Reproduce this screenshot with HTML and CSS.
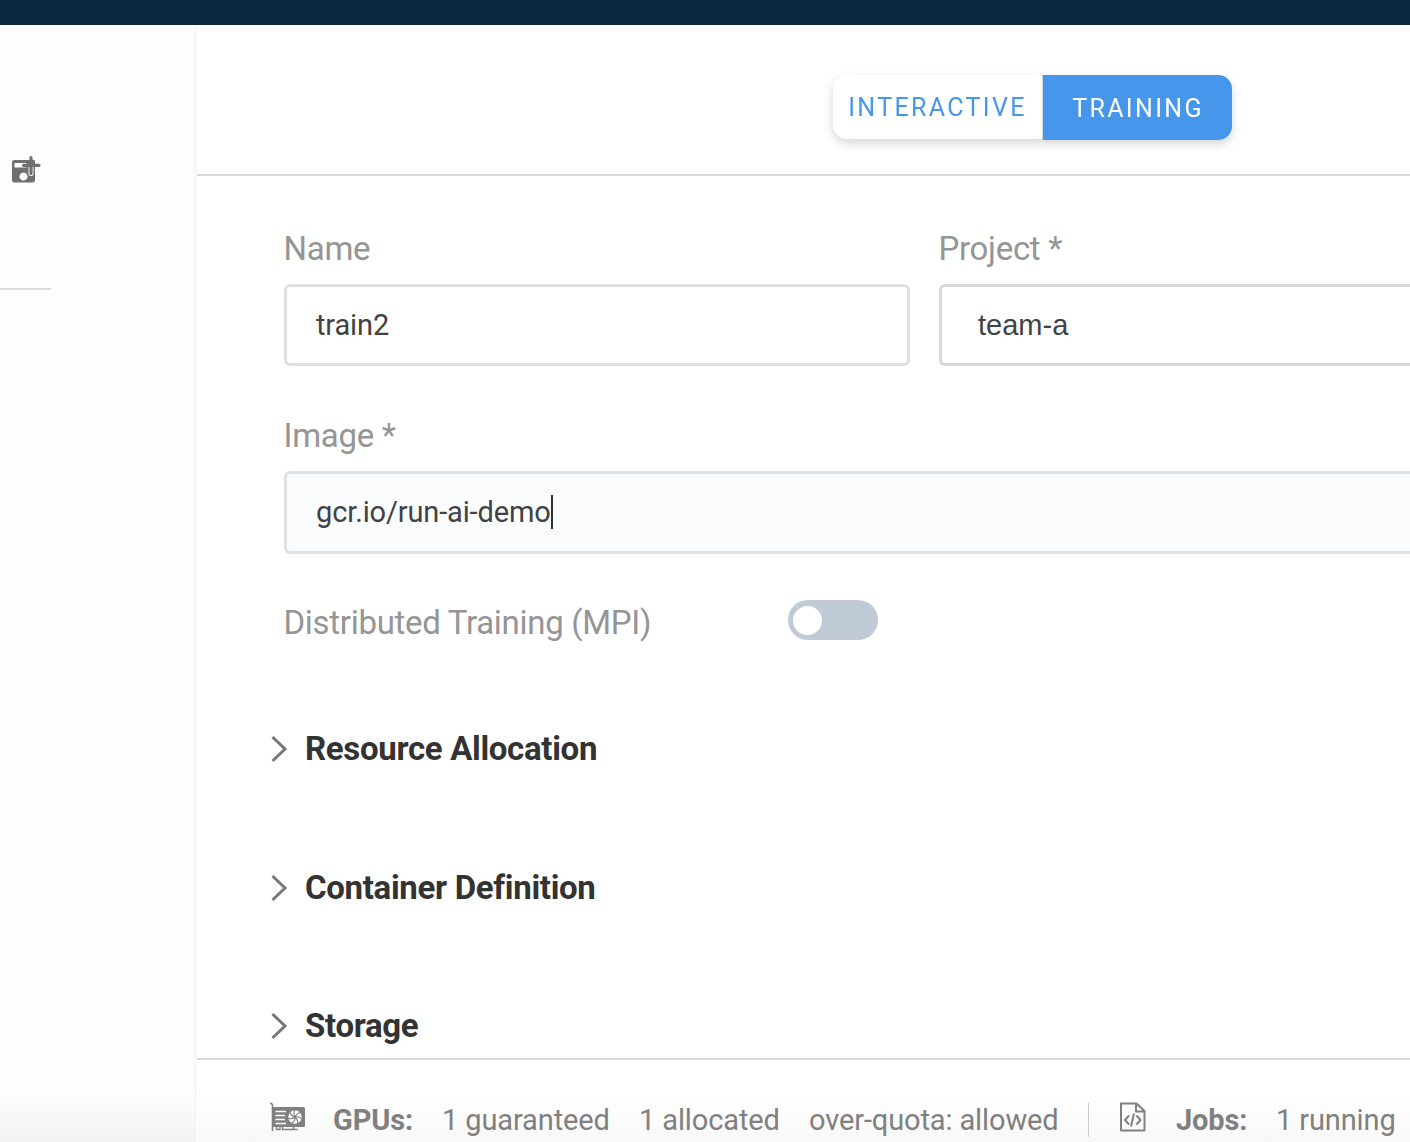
FILE: index.html
```html
<!DOCTYPE html>
<html lang="en">
<head>
<meta charset="utf-8">
<title>New job</title>
<link rel="stylesheet" href="styles.css">
</head>
<body>
<div class="topbar"></div>
<div class="layout">
  <aside class="sidebar">
    <svg class="save-icon" width="32" height="30" viewBox="0 0 32 30">
      <path fill="#707070" fill-rule="evenodd" d="M4.500 5h19.500q1 0 1 1v19q0 2.500-2.500 2.500h-18q-2.500 0-2.500-2.500v-17.500q0-2.500 2.500-2.500zM4.500 8v4.500h12v-4.500zM13.500 17.500a4 4 0 1 0 .01 0z"/>
      <path d="M21 12v6.500" fill="none" stroke="#fcfcfc" stroke-width="5" stroke-linecap="round"/>
      <path d="M21 2.500v16M13.500 10.300h15.500" fill="none" stroke="#707070" stroke-width="3.200" stroke-linecap="round"/>
    </svg>
    <div class="sidebar-line"></div>
  </aside>
  <main class="main">
    <header class="modes">
      <div class="segmented">
        <button class="segment">INTERACTIVE</button>
        <button class="segment active">TRAINING</button>
      </div>
    </header>
    <form class="form">
      <div class="field-row">
        <div class="field name"><label>Name</label><div class="input">train2</div></div>
        <div class="field project"><label>Project *</label><div class="input select">team-a</div></div>
      </div>
      <div class="field image"><label>Image *</label><div class="input focused">gcr.io/run-ai-demo<span class="caret"></span></div></div>
      <div class="switch-row"><span class="switch-label">Distributed Training (MPI)</span><span class="switch"></span></div>
      <div class="section"><svg width="18" height="30" viewBox="0 0 18 30"><path d="M2.500 3 15 15 2.500 27"/></svg><h2>Resource Allocation</h2></div>
      <div class="section"><svg width="18" height="30" viewBox="0 0 18 30"><path d="M2.500 3 15 15 2.500 27"/></svg><h2>Container Definition</h2></div>
      <div class="section"><svg width="18" height="30" viewBox="0 0 18 30"><path d="M2.500 3 15 15 2.500 27"/></svg><h2>Storage</h2></div>
    </form>
    <footer class="status">
      <svg class="gpu-icon" width="36" height="30" viewBox="0 0 36 30" fill="none" stroke="#808080">
        <path d="M0 1.500h1Q2.500 1.500 2.500 4v25" stroke-width="1.600"/>
        <path d="M2.500 5h31q1.500 0 1.500 1.500v17q0 1.500-1.500 1.500h-31z" fill="#808080" stroke="none"/>
        <path d="M5.500 9.500h10.500M5.500 13.500h9.500M5.500 17.500h9.500M5.500 21.500h10.500" stroke="#fcfcfc" stroke-width="1.500"/>
        <circle cx="25" cy="15" r="6.800" fill="#fcfcfc" stroke="none"/>
        <path d="M25 15Q23 11 25 8M25 15Q27 11 30.500 10.500M25 15Q29 14 32 17M25 15Q28.500 18 27.500 22M25 15Q25.500 19 22 21M25 15Q21 18 18 16M25 15Q21 14 20 10" stroke-width="1.100"/>
        <path d="M6.500 25v2.500h3.500v-2.500M12.500 25v2.500h11v-2.500M24 27.500h3.500" stroke-width="1.400"/>
      </svg>
      <b class="gpus">GPUs:</b>
      <span class="guaranteed">1 guaranteed</span>
      <span class="allocated">1 allocated</span>
      <span class="quota">over-quota: allowed</span>
      <i class="divider"></i>
      <svg class="jobs-icon" width="26" height="30" viewBox="0 0 26 30" fill="none" stroke="#808080" stroke-width="2">
        <path d="M1 1.500h15.500L24.500 9v19.500H1zM16 1.500V9.500h8.500" stroke-linejoin="round"/>
        <path d="M9 13.500 5 18 9 22.500M16.500 13.500l4 4.500-4 4.500M14 11.500l-3 13"/>
      </svg>
      <b class="jobs">Jobs:</b>
      <span>1 running</span>
    </footer>
  </main>
</div>
</body>
</html>
```

FILE: styles.css
```css
* { box-sizing: border-box; }
body { margin: 0; width: 1410px; height: 1142px; overflow: hidden; background: #fff; font-family: Roboto, sans-serif; }
.topbar { height: 25px; background: #0a273d; }
.layout { display: flex; height: 1117px; }
.sidebar { flex: 0 0 196px; padding-top: 130px; background: linear-gradient(#fdfdfd calc(100% - 50px), #f3f3f3); border-right: 1px solid #f0f0f0; }
.save-icon { display: block; margin-left: 10px; }
.sidebar-line { width: 51px; height: 2px; margin-top: 103px; background: #dcdcdc; }
.main { flex: 1; min-width: 0; display: flex; flex-direction: column; padding-left: 1px; }
.modes { flex: 0 0 151px; padding: 50px 0 0 636px; border-bottom: 2px solid #d8d8d8; }
.segmented { display: flex; width: 399px; height: 65px; border-radius: 14px; filter: drop-shadow(0 4px 5px rgba(0, 0, 0, .16)); }
.segment { width: 210px; height: 64px; margin: 0; padding: 2px 0 0; border: 0; border-right: 1px solid #d8d8d8; border-radius: 14px 0 0 14px; background: #fff; color: #4696ec; font: 25px/62px Roboto, sans-serif; letter-spacing: 2.350px; box-shadow: inset -1px 0 #fff; }
.segment.active { width: 189px; height: 65px; padding-left: 1px; border: 0; border-radius: 0 14px 14px 0; background: #4696ec; color: #fff; box-shadow: none; }
.form { flex: 0 0 882px; padding: 53px 0 0 87px; overflow: hidden; }
.field-row { display: flex; gap: 29px; margin-bottom: 50px; }
.field { display: flex; flex-direction: column; gap: 15px; }
.name { flex: 0 0 626px; }
.project { flex: 0 0 626px; }
.image { width: 1281px; }
label, .switch-label { height: 40px; font-size: 33px; line-height: 39px; letter-spacing: -.3px; color: #959595; white-space: nowrap; }
label { margin-left: -.5px; }
.input { display: flex; align-items: center; height: 82px; padding-left: 29px; border: 3px solid #e0e0e0; border-radius: 6px; font-size: 29px; letter-spacing: -.14px; color: #424242; }
.select { padding: 1px 0 0 36px; border-color: #d7d7d7; font-family: "Liberation Sans", sans-serif; letter-spacing: 0; }
.focused { height: 83px; padding-bottom: 2px; background: #fbfcfe; }
.caret { width: 2px; height: 34px; background: #303030; }
.switch-row { display: flex; height: 40px; margin: 46px 0 89px; }
.switch-label { width: 504.500px; margin-left: -.5px; padding-top: 3px; }
.switch { width: 90px; height: 40px; padding: 5.500px 5px; border-radius: 20px; background: #c0cad7; }
.switch::before { content: ""; display: block; width: 29px; height: 29px; border-radius: 50%; background: #fff; }
.section { display: flex; align-items: center; height: 40px; margin: 0 0 98.500px -14px; gap: 17px; }
.section path { fill: none; stroke: #777; stroke-width: 3; }
h2 { margin: 0; font-size: 33px; line-height: 40px; font-weight: 700; letter-spacing: -.32px; color: #333; }
.status { flex: 1; display: flex; align-items: center; padding: 37px 0 0 73px; border-top: 2px solid #d8d8d8; background: linear-gradient(#fff 40%, #f8f8f8); color: #808080; font-size: 29px; line-height: 40px; letter-spacing: -.12px; white-space: nowrap; }
.status svg, .divider { flex-shrink: 0; }
.gpu-icon { margin: -5px 27px 0 0; }
.gpus { width: 109px; }
.guaranteed { width: 197px; }
.allocated { width: 170px; }
.quota { width: 279px; }
.divider { width: 1px; height: 34px; margin-right: 31px; background: #ccc; }
.jobs-icon { margin: -6px 30px 0 0; }
.jobs { width: 100px; }
```
